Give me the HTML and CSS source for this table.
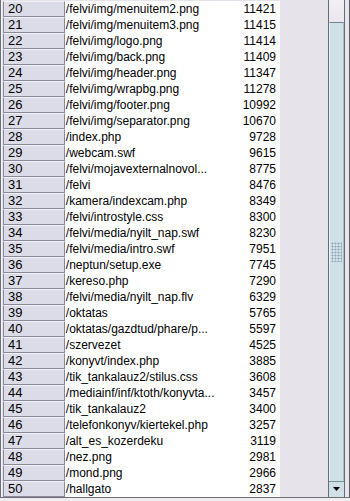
FILE: index.html
```html
<!DOCTYPE html>
<html>
<head>
<meta charset="utf-8">
<link rel="stylesheet" href="styles.css">
</head>
<body>
<div class="window">
  <div class="viewport">
    <div class="table">
      <div class="row"><div class="rh">20</div><div class="path">/felvi/img/menuitem2.png</div><div class="num">11421</div></div>
      <div class="row"><div class="rh">21</div><div class="path">/felvi/img/menuitem3.png</div><div class="num">11415</div></div>
      <div class="row"><div class="rh">22</div><div class="path">/felvi/img/logo.png</div><div class="num">11414</div></div>
      <div class="row"><div class="rh">23</div><div class="path">/felvi/img/back.png</div><div class="num">11409</div></div>
      <div class="row"><div class="rh">24</div><div class="path">/felvi/img/header.png</div><div class="num">11347</div></div>
      <div class="row"><div class="rh">25</div><div class="path">/felvi/img/wrapbg.png</div><div class="num">11278</div></div>
      <div class="row"><div class="rh">26</div><div class="path">/felvi/img/footer.png</div><div class="num">10992</div></div>
      <div class="row"><div class="rh">27</div><div class="path">/felvi/img/separator.png</div><div class="num">10670</div></div>
      <div class="row"><div class="rh">28</div><div class="path">/index.php</div><div class="num">9728</div></div>
      <div class="row"><div class="rh">29</div><div class="path">/webcam.swf</div><div class="num">9615</div></div>
      <div class="row"><div class="rh">30</div><div class="path">/felvi/mojavexternalnovol...</div><div class="num">8775</div></div>
      <div class="row"><div class="rh">31</div><div class="path">/felvi</div><div class="num">8476</div></div>
      <div class="row"><div class="rh">32</div><div class="path">/kamera/indexcam.php</div><div class="num">8349</div></div>
      <div class="row"><div class="rh">33</div><div class="path">/felvi/introstyle.css</div><div class="num">8300</div></div>
      <div class="row"><div class="rh">34</div><div class="path">/felvi/media/nyilt_nap.swf</div><div class="num">8230</div></div>
      <div class="row"><div class="rh">35</div><div class="path">/felvi/media/intro.swf</div><div class="num">7951</div></div>
      <div class="row"><div class="rh">36</div><div class="path">/neptun/setup.exe</div><div class="num">7745</div></div>
      <div class="row"><div class="rh">37</div><div class="path">/kereso.php</div><div class="num">7290</div></div>
      <div class="row"><div class="rh">38</div><div class="path">/felvi/media/nyilt_nap.flv</div><div class="num">6329</div></div>
      <div class="row"><div class="rh">39</div><div class="path">/oktatas</div><div class="num">5765</div></div>
      <div class="row"><div class="rh">40</div><div class="path">/oktatas/gazdtud/phare/p...</div><div class="num">5597</div></div>
      <div class="row"><div class="rh">41</div><div class="path">/szervezet</div><div class="num">4525</div></div>
      <div class="row"><div class="rh">42</div><div class="path">/konyvt/index.php</div><div class="num">3885</div></div>
      <div class="row"><div class="rh">43</div><div class="path">/tik_tankalauz2/stilus.css</div><div class="num">3608</div></div>
      <div class="row"><div class="rh">44</div><div class="path">/mediainf/inf/ktoth/konyvta...</div><div class="num">3457</div></div>
      <div class="row"><div class="rh">45</div><div class="path">/tik_tankalauz2</div><div class="num">3400</div></div>
      <div class="row"><div class="rh">46</div><div class="path">/telefonkonyv/kiertekel.php</div><div class="num">3257</div></div>
      <div class="row"><div class="rh">47</div><div class="path">/alt_es_kozerdeku</div><div class="num">3119</div></div>
      <div class="row"><div class="rh">48</div><div class="path">/nez.png</div><div class="num">2981</div></div>
      <div class="row"><div class="rh">49</div><div class="path">/mond.png</div><div class="num">2966</div></div>
      <div class="row"><div class="rh">50</div><div class="path">/hallgato</div><div class="num">2837</div></div>
    </div>
    <div class="filler"></div>
    <div class="scrollbar">
      <div class="track"></div>
      <div class="thumb"><div class="grip"></div></div>
      <div class="btn-down">
        <svg width="9" height="5" viewBox="0 0 9 5"><path d="M1 0 H8 L4.5 4 Z" fill="#000"/></svg>
      </div>
    </div>
    <div class="right-edge"></div>
  </div>
  <div class="bottom-edge"></div>
</div>
</body>
</html>
```

FILE: styles.css
```css
html, body {
  margin: 0;
  padding: 0;
  background: #e6e4ea;
}
.window {
  width: 350px;
  height: 501px;
  display: flex;
  flex-direction: column;
  overflow: hidden;
  font-family: "Liberation Sans", Arial, sans-serif;
  font-size: 12px;
  color: #000;
}
.viewport {
  display: flex;
  height: 497px;
  border-left: 1px solid #6f6f78;
  box-sizing: border-box;
}
.table {
  width: 279px;
  padding-left: 1px;
  padding-top: 1px;
  background: #e6e4ea;
  border-left: 1px solid #f4f4f6;
  box-sizing: border-box;
}
.row {
  display: flex;
  height: 16px;
  line-height: 16px;
}
.rh {
  width: 62px;
  box-sizing: border-box;
  padding-left: 4px;
  background: #dcdce8;
  border-top: 1px solid #f0f0f6;
  border-right: 1px solid #8a8a9c;
  border-bottom: 1px solid #8a8a9c;
  border-left: 1px solid #8a8a9c;
  line-height: 14px;
  font-size: 13px;
}
.path {
  width: 175px;
  padding-left: 1px;
  box-sizing: border-box;
  background: #fff;
  white-space: nowrap;
  overflow: hidden;
}
.num {
  width: 41px;
  box-sizing: border-box;
  padding-right: 4px;
  text-align: right;
  background: #fff;
}
.filler {
  width: 48px;
  background: #e6e4ea;
}
.scrollbar {
  width: 17px;
  display: flex;
  flex-direction: column;
  border-left: 1px solid #5f6f78;
  border-right: 1px solid #5f6f78;
  box-sizing: border-box;
  background: #f2eff3;
}
.track {
  height: 22px;
  background: linear-gradient(#f2eff3, #ece6ee);
}
.thumb {
  flex: 1;
  background: #cfe1e7;
  border-top: 1px solid #6f8590;
  border-left: 1px solid #eef6f8;
  border-right: 1px solid #a8bec6;
  display: flex;
  align-items: center;
  justify-content: center;
}
.grip {
  width: 11px;
  height: 20px;
  background-image: radial-gradient(circle, #8ea6b8 0.9px, transparent 1.1px);
  background-size: 3px 3px;
}
.btn-down {
  height: 15px;
  background: #cfe1e7;
  border-top: 1px solid #7a9099;
  display: flex;
  align-items: center;
  justify-content: center;
}
.right-edge {
  width: 5px;
  background: #e8e6ec;
  border-right: 1px solid #5a5a60;
  box-sizing: border-box;
}
.bottom-edge {
  height: 4px;
  background: #efedf0;
  border-top: 1px solid #6f6f78;
  box-sizing: border-box;
}
```
